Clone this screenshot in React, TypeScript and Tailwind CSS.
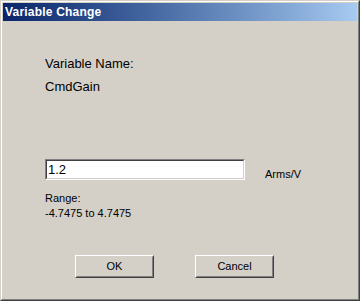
import React from 'react';

function Win2kButton({ label }: { label: string }) {
  return (
    <div className="h-[23px] w-[79px] border border-t-white border-l-white border-b-[#404040] border-r-[#404040]">
      <button
        type="button"
        className="flex h-full w-full items-center justify-center border border-t-[#d4d0c8] border-l-[#d4d0c8] border-b-[#808080] border-r-[#808080] bg-[#d4d0c8] text-[11px] leading-[13px] text-black"
      >
        {label}
      </button>
    </div>
  );
}

export default function App() {
  return (
    <div className="h-[301px] w-[360px] border border-t-[#d4d0c8] border-l-[#d4d0c8] border-b-[#404040] border-r-[#404040] bg-[#d4d0c8] font-['Liberation_Sans',Arial,sans-serif] text-black">
      <div className="flex h-full flex-col border border-t-white border-l-white border-b-[#808080] border-r-[#808080] p-px">
        <div className="flex h-[18px] items-center bg-gradient-to-r from-[#0a246a] to-[#a6caf0] px-[2px]">
          <span className="text-[12px] font-bold leading-[14px] tracking-[0.2px] text-white">Variable Change</span>
        </div>

        <div className="flex flex-col pl-[42px]">
          <div className="mt-[35px] text-[13px] leading-[15px]">Variable Name:</div>
          <div className="mt-[8px] text-[13px] leading-[15px]">CmdGain</div>

          <div className="mt-[65px] flex items-start">
            <div className="h-[21px] w-[200px] border border-t-[#808080] border-l-[#808080] border-b-white border-r-white">
              <div className="flex h-full w-full items-center border border-t-[#404040] border-l-[#404040] border-b-[#d4d0c8] border-r-[#d4d0c8] bg-white px-px text-[13px] leading-[15px] text-black">
                1.2
              </div>
            </div>
            <span className="ml-[20px] mt-[9px] text-[11px] leading-[13px]">Arms/V</span>
          </div>

          <div className="mt-[11px] text-[11px] leading-[13px]">Range:</div>
          <div className="mt-[2px] text-[11px] leading-[13px]">-4.7475 to 4.7475</div>

          <div className="ml-[30px] mt-[35px] flex gap-[41px]">
            <Win2kButton label="OK" />
            <Win2kButton label="Cancel" />
          </div>
        </div>
      </div>
    </div>
  );
}
